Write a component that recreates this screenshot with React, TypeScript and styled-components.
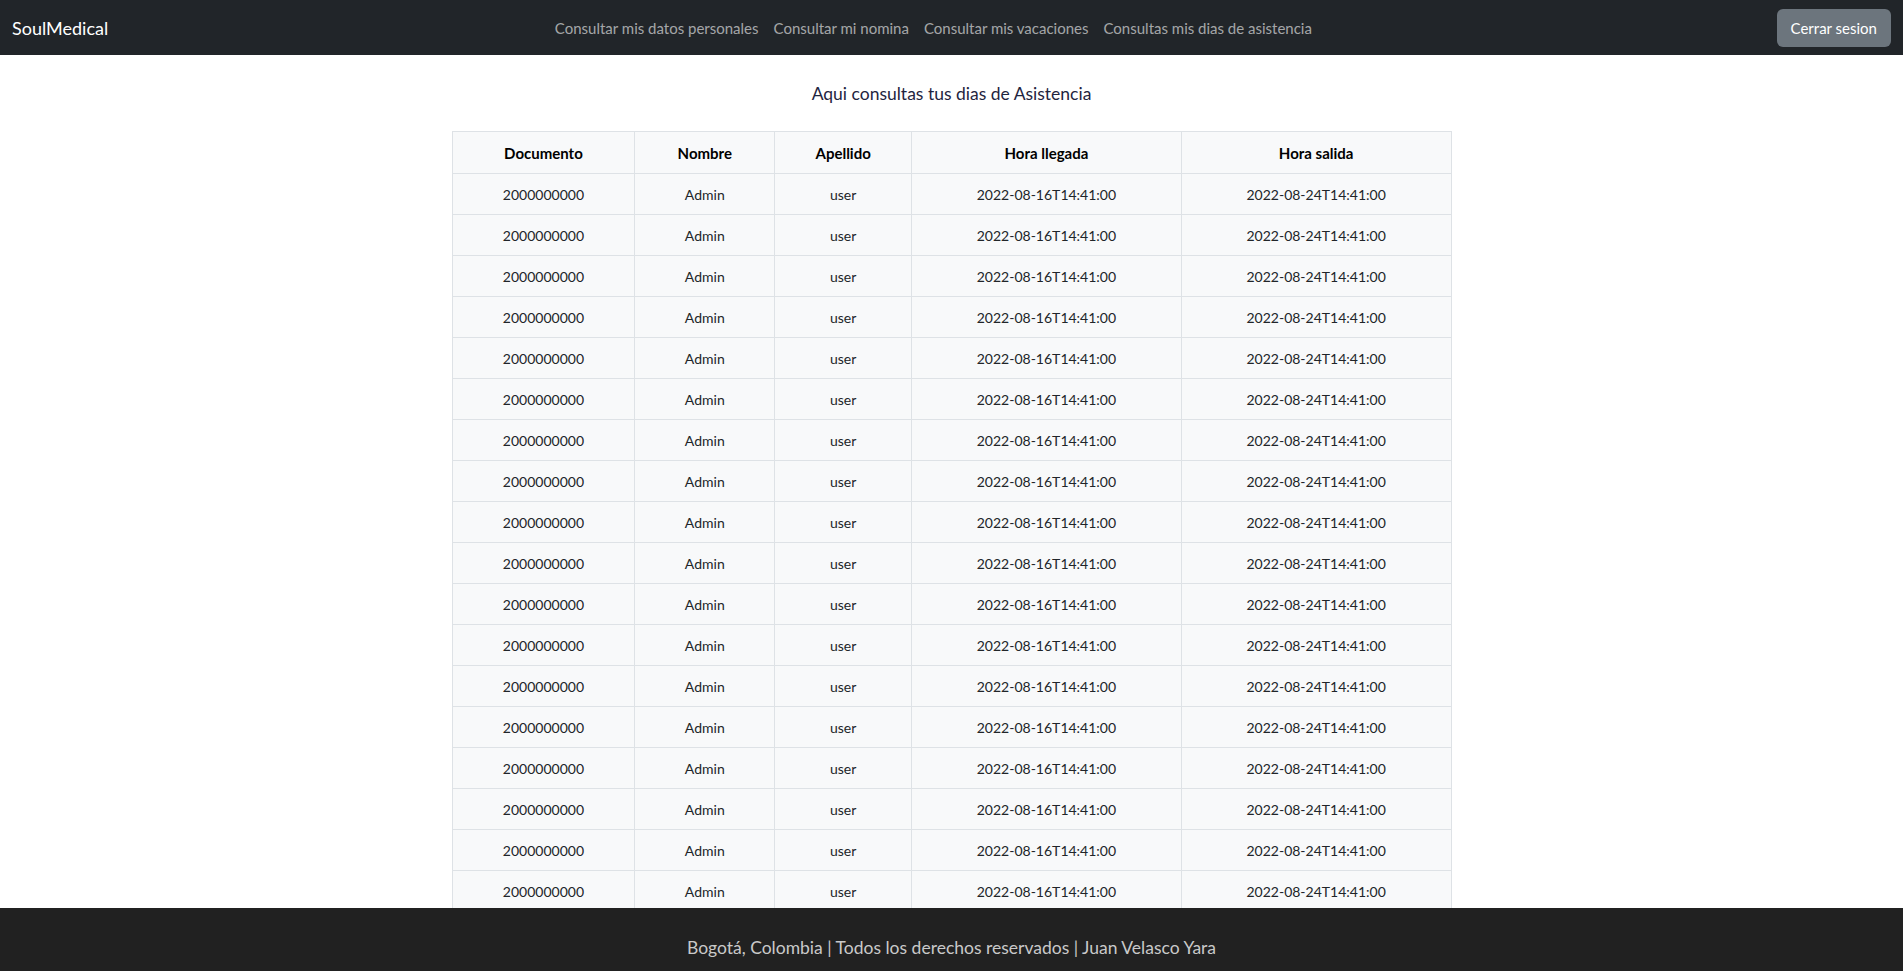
import styled, { createGlobalStyle } from 'styled-components';

const GlobalStyle = createGlobalStyle`
  body {
    margin: 0;
    background: #ffffff;
    font-family: Lato, "Noto Sans", sans-serif;
    color: #212529;
  }
  * { box-sizing: border-box; }
`;

const NavBar = styled.nav`
  display: flex;
  align-items: center;
  height: 55px;
  padding: 0 12px;
  background: #212529;
`;

const Brand = styled.a`
  font-size: 18px;
  color: #ffffff;
  text-decoration: none;
  margin-right: 16px;
`;

const NavLinks = styled.ul`
  display: flex;
  list-style: none;
  margin: 0 auto;
  padding: 0;
  position: relative;
  left: -17px;
`;

const NavLink = styled.li`
  padding: 8px 7.5px;
  font-size: 15px;
  color: rgba(255, 255, 255, 0.6);
  cursor: pointer;
`;

const LogoutButton = styled.button`
  height: 38px;
  padding: 0 14px;
  border: none;
  border-radius: 6px;
  background: #6c757d;
  color: #ffffff;
  font-family: inherit;
  font-size: 15px;
`;

const Title = styled.h5`
  margin: 0;
  padding: 18px 0 16px;
  text-align: center;
  font-size: 17.5px;
  font-weight: 400;
  line-height: 42px;
  color: #1f2440;
`;

const Table = styled.table`
  width: 1000px;
  margin: 0 auto;
  border-collapse: collapse;
  background: #f8f9fa;
`;

const HeadCell = styled.th<{ w: number }>`
  width: ${({ w }) => w}px;
  height: 42px;
  padding: 0 8px;
  border: 1px solid #dee2e6;
  font-size: 15px;
  font-weight: 700;
  color: #000000;
  text-align: center;
`;

const Cell = styled.td`
  height: 41px;
  padding: 0 8px;
  border: 1px solid #dee2e6;
  font-size: 14px;
  text-align: center;
  color: #212529;
`;

const Footer = styled.footer`
  position: fixed;
  left: 0;
  right: 0;
  bottom: 0;
  height: 63px;
  padding-top: 29px;
  display: flex;
  justify-content: center;
  background: #212121;
  color: #c9c9c9;
  font-size: 17.5px;
  line-height: 22px;
`;

const columns = [
  { label: 'Documento', w: 183 },
  { label: 'Nombre', w: 140 },
  { label: 'Apellido', w: 137 },
  { label: 'Hora llegada', w: 270 },
  { label: 'Hora salida', w: 270 },
];

const links = [
  'Consultar mis datos personales',
  'Consultar mi nomina',
  'Consultar mis vacaciones',
  'Consultas mis dias de asistencia',
];

const rows = Array.from({ length: 18 }, () => ({
  documento: '2000000000',
  nombre: 'Admin',
  apellido: 'user',
  llegada: '2022-08-16T14:41:00',
  salida: '2022-08-24T14:41:00',
}));

export default function App() {
  return (
    <>
      <GlobalStyle />
      <NavBar>
        <Brand href="#">SoulMedical</Brand>
        <NavLinks>
          {links.map((l) => (
            <NavLink key={l}>{l}</NavLink>
          ))}
        </NavLinks>
        <LogoutButton>Cerrar sesion</LogoutButton>
      </NavBar>
      <main>
        <Title>Aqui consultas tus dias de Asistencia</Title>
        <Table>
          <thead>
            <tr>
              {columns.map((c) => (
                <HeadCell key={c.label} w={c.w}>{c.label}</HeadCell>
              ))}
            </tr>
          </thead>
          <tbody>
            {rows.map((r, i) => (
              <tr key={i}>
                <Cell>{r.documento}</Cell>
                <Cell>{r.nombre}</Cell>
                <Cell>{r.apellido}</Cell>
                <Cell>{r.llegada}</Cell>
                <Cell>{r.salida}</Cell>
              </tr>
            ))}
          </tbody>
        </Table>
      </main>
      <Footer>Bogotá, Colombia | Todos los derechos reservados | Juan Velasco Yara</Footer>
    </>
  );
}
